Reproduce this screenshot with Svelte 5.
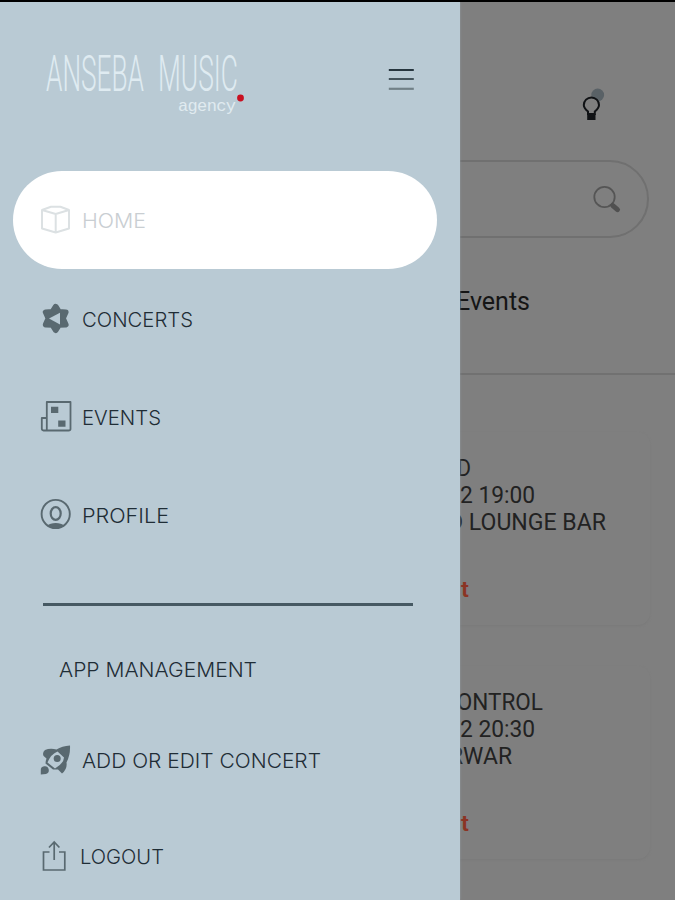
<script>
  const menu = [
    { label: 'HOME', icon: 'box', width: 64, active: true },
    { label: 'CONCERTS', icon: 'star', width: 111 },
    { label: 'EVENTS', icon: 'news', width: 79 },
    { label: 'PROFILE', icon: 'person', width: 87 }
  ];
  const management = [
    { label: 'ADD OR EDIT CONCERT', icon: 'rocket', width: 239 },
    { label: 'LOGOUT', icon: 'share', width: 84 }
  ];
  const cards = [
    { title: 'D', titleEnd: 471, titleWidth: 14, time: '2 19:00', place: 'D LOUNGE BAR', placeEnd: 606, placeWidth: 158 },
    { title: 'CONTROL', titleEnd: 543, titleWidth: 101, time: '2 20:30', place: 'RWAR', placeEnd: 512, placeWidth: 63 }
  ];
</script>

{#snippet fitted(text, width, end)}
  <svg class="line" width={end} height="27" style:width="{end}px">
    <text x={end - width} y="21.5" textLength={width} lengthAdjust="spacingAndGlyphs">{text}</text>
  </svg>
{/snippet}

{#snippet icon(name)}
  <svg class="icon" width="32" height="34" viewBox="0 0 32 34">
    {#if name === 'box'}
      <g fill="none" stroke="#dce1e3" stroke-width="2" stroke-linejoin="round">
        <path d="M2 7 15.7 11 29 7V25.5L15.7 29.5 2 25.5ZM2 7 11 3.7h9.4L29 7M15.7 11V29.5" />
      </g>
    {:else if name === 'star'}
      <path fill="#596970" stroke="#596970" stroke-width="5.6" stroke-linejoin="round" d="M15.7 4.6 19 9.8 25.8 10.2 23 16.3 25.8 22.7 19 22.9 15.7 28.2 12.4 22.9 5.6 22.7 8.4 16.3 5.6 10.2 12.4 9.8Z" />
      <path fill="#b9cad4" d="M9 16.5 20 10.8V22.6Z" />
    {:else if name === 'news'}
      <path fill="none" stroke="#596970" stroke-width="1.8" stroke-linejoin="round" d="M6.8 30.5V2H30.5V29Q30.5 30.5 28.5 30.5H3.5Q1.8 30.5 1.8 28.5V18H6.8" />
      <path fill="#596970" d="M11 6.8h7.3v6.2H11zM18.2 20.5h7.3v6.2h-7.3z" />
    {:else if name === 'person'}
      <circle cx="15.7" cy="16" r="14.1" fill="none" stroke="#596970" stroke-width="1.9" />
      <ellipse cx="15.7" cy="15.5" rx="5" ry="6.3" fill="none" stroke="#596970" stroke-width="2.2" />
      <path fill="#596970" d="M7.3 27.5Q10 25 15.7 25T24.1 27.5Q16 33 7.3 27.5Z" />
    {:else if name === 'rocket'}
      <path fill="#596970" fill-rule="evenodd" d="M30 2.5Q22 3 16.5 6.5Q10 5 5 7Q2 9.5 3.6 13L6.5 15.5Q5.5 18 5.5 20.5L13 26.5L18 26.5L22 30.5Q27.5 26 26.5 19.5Q30.5 12 30 2.5ZM17.5 8.5 24 14.5Q24 20 15 25.5L7.5 19.5Q11 11 17.5 8.5Z" />
      <circle cx="17.2" cy="15.5" r="3.5" fill="#596970" />
      <path fill="#596970" d="M.8 31.5V27.5A4 4 0 1 1 6 31Z" />
    {:else}
      <path fill="none" stroke="#596970" stroke-width="1.7" d="M9.5 13H3.5V31H24.8V13H19M14.2 21V3M9 8.5 14.2 3 19.4 8.5" />
    {/if}
  </svg>
{/snippet}

{#snippet item(entry)}
  <li class:active={entry.active} class:tight={entry.icon === 'share'}>
    {@render icon(entry.icon)}
    <svg class="label" width={entry.width + 2} height="28" style:width="{entry.width + 2}px">
      <text x="-1" y="22" textLength={entry.width} lengthAdjust="spacingAndGlyphs">{entry.label}</text>
    </svg>
  </li>
{/snippet}

<div class="screen">
  <main>
    <header>
      <svg class="bulb" width="28" height="36" viewBox="0 0 28 36">
        <circle cx="16.7" cy="8" r="6.4" fill="#596166" />
        <path fill="#7f7f7f" stroke="#101215" stroke-width="2" d="M7 27V24.5Q2.8 21 2.8 18A7.6 7.6 0 0 1 18 18Q18 21 13.8 24.5V27Z" />
        <path fill="#101215" d="M6.2 27h8.3v6H6.2z" />
      </svg>
      <div class="search">
        <svg width="30" height="30" viewBox="0 0 30 30">
          <circle cx="12.5" cy="13" r="10.2" fill="none" stroke="#555" stroke-width="1.8" />
          <path d="M19 20 21 21.8" stroke="#505050" stroke-width="3" />
          <path d="M20.8 21.6 25.5 25.6" stroke="#505050" stroke-width="5" stroke-linecap="round" />
        </svg>
      </div>
      <div class="tab">{@render fitted('Events', 74, 530)}</div>
    </header>
    {#each cards as card}
      <article>
        {@render fitted(card.title, card.titleWidth, card.titleEnd)}
        {@render fitted(card.time, 75, 535)}
        {@render fitted(card.place, card.placeWidth, card.placeEnd)}
        <div class="more">{@render fitted('rt', 17, 469)}</div>
      </article>
    {/each}
  </main>

  <aside>
    <div class="top">
      <svg class="logo" width="202" height="74" viewBox="0 0 202 74">
        <g class="brand">
          <text x="0" y="42" textLength="98" lengthAdjust="spacingAndGlyphs">ANSEBA</text>
          <text x="112" y="42" textLength="80" lengthAdjust="spacingAndGlyphs">MUSIC</text>
        </g>
        <text class="sub" x="132" y="62" textLength="58" lengthAdjust="spacing">agency</text>
        <circle cx="194.5" cy="49" r="3.4" fill="#c90f20" />
      </svg>
      <svg class="burger" width="26" height="24" viewBox="0 0 26 24">
        <path d="M.8 2h25" stroke="#26353e" stroke-width="2" />
        <path d="M.8 11h25" stroke="#43535b" stroke-width="2" />
        <path d="M.8 20.8h25" stroke="#718087" stroke-width="2.2" />
      </svg>
    </div>
    <ul>
      {#each menu as entry}{@render item(entry)}{/each}
    </ul>
    <hr />
    <svg class="heading" width="202" height="28">
      <text x="-1" y="21.5" textLength="198" lengthAdjust="spacingAndGlyphs">APP MANAGEMENT</text>
    </svg>
    <ul class="manage">
      {#each management as entry}{@render item(entry)}{/each}
    </ul>
  </aside>
</div>

<style>
  :global(body) { margin: 0; overflow: hidden; }
  .screen {
    position: relative;
    box-sizing: border-box;
    width: 675px;
    height: 900px;
    border-top: 2px solid #000;
    background: #7f7f7f;
    overflow: hidden;
  }
  svg { display: block; flex: none; }
  main { font-family: Roboto, sans-serif; }
  header {
    box-sizing: border-box;
    height: 373px;
    padding-top: 85px;
    border-bottom: 2px solid #717171;
  }
  .bulb { margin-left: 581px; }
  .search {
    box-sizing: border-box;
    display: flex;
    align-items: center;
    justify-content: flex-end;
    width: 623px;
    height: 78px;
    margin: 37px 0 0 26px;
    padding-right: 25px;
    border: 2px solid #707070;
    border-radius: 40px;
  }
  .tab { margin-top: 50px; }
  .line { overflow: visible; font-size: 23px; fill: #222; }
  .tab .line { font-size: 25px; fill: #151515; }
  article {
    box-sizing: border-box;
    width: 650px;
    height: 193px;
    margin-top: 57px;
    padding-top: 21.5px;
    border-radius: 12px;
    box-shadow: 0 1px 3px -1px #747474;
  }
  article + article { margin-top: 41px; }
  .more { margin-top: 40px; }
  .more .line { font-size: 22px; font-weight: 600; fill: #8b3424; }
  aside {
    position: absolute;
    inset: 0 auto 0 0;
    box-sizing: border-box;
    width: 460px;
    padding: 47px 0 0 13px;
    background: #b9cad4;
    box-shadow: 0 0 2px #929ca2;
    font: 300 20.5px Inter, 'Open Sans', sans-serif;
    fill: #1f2d36;
  }
  .top { display: flex; height: 122px; padding-left: 33px; }
  .logo { overflow: visible; }
  .brand { font: 300 50px Roboto, sans-serif; fill: #dfebf1; }
  .sub { font: 400 17px 'Liberation Mono', monospace; fill: #e0ebf0; }
  .burger { margin: 19px 0 0 140px; }
  ul { margin: 0; padding: 0; list-style: none; }
  li {
    box-sizing: border-box;
    display: flex;
    align-items: center;
    width: 424px;
    height: 98.4px;
    padding-left: 27px;
    gap: 11px;
    border-radius: 50px;
  }
  li.active { background: #fff; fill: #c9ced2; }
  .tight { gap: 9px; }
  .label, .heading { overflow: visible; }
  hr { width: 370px; height: 3px; margin: 38.4px 0 0 29.5px; border: 0; background: #465963; }
  .heading { margin: 49px 0 0 47px; }
  .manage { padding-top: 29px; }
  .manage li { height: 96px; }
</style>
